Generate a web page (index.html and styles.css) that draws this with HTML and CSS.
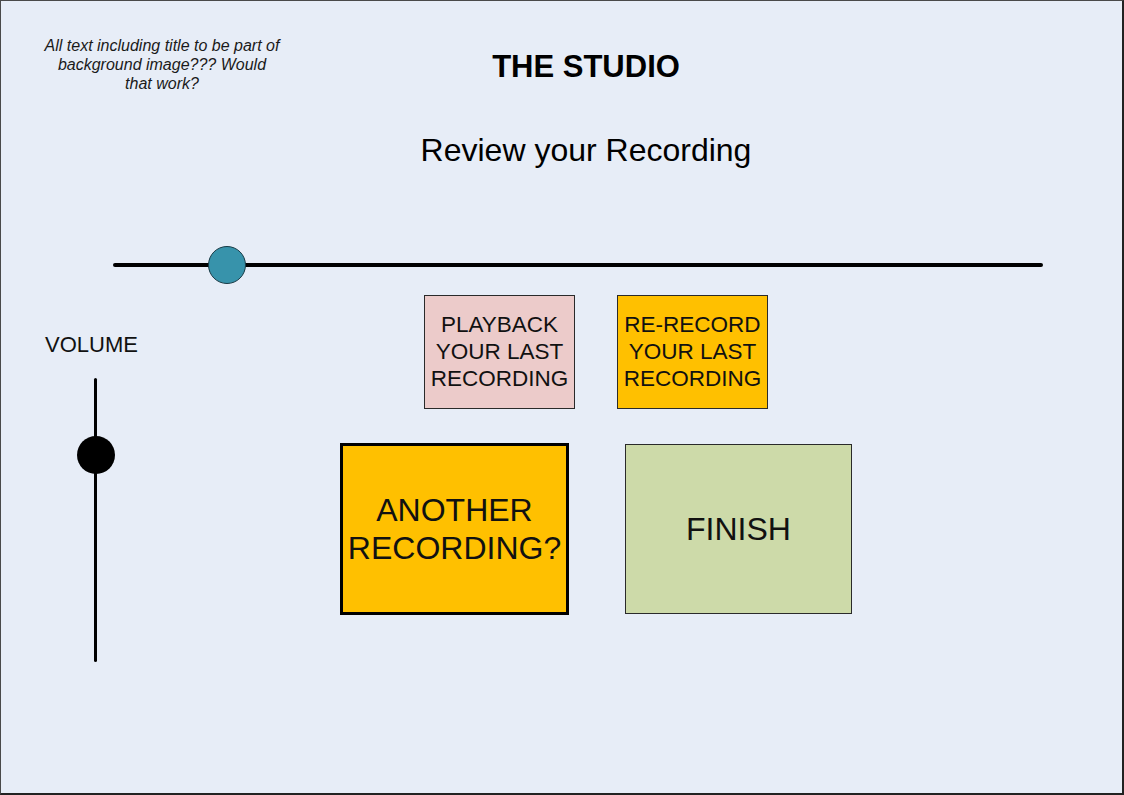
FILE: index.html
```html
<!DOCTYPE html>
<html lang="en">
<head>
    <meta charset="UTF-8" />
    <meta name="viewport" content="width=device-width, initial-scale=1" />
    <title>The Studio - Review your Recording</title>
    <link rel="stylesheet" href="styles.css">
</head>
<body>

    <div class="frame">

        <!-- Header: designer note + titles -->
        <header class="header">
            <p class="note">All text including title to be part of background image??? Would that work?</p>
            <div class="titles">
                <h1 class="title">THE STUDIO</h1>
                <h2 class="subtitle">Review your Recording</h2>
            </div>
        </header>

        <!-- Playback position -->
        <div class="seek">
            <span class="seek-knob"></span>
        </div>

        <div class="lower">
            <!-- Volume -->
            <div class="volume">
                <div class="volume-label">VOLUME</div>
                <div class="volume-track">
                    <span class="volume-knob"></span>
                </div>
            </div>

            <!-- Actions -->
            <div class="actions">
                <div class="row row-small">
                    <a href="#" class="box box-small playback">PLAYBACK<br>YOUR LAST<br>RECORDING</a>
                    <a href="#" class="box box-small rerecord">RE-RECORD<br>YOUR LAST<br>RECORDING</a>
                </div>
                <div class="row row-big">
                    <a href="#" class="box another">ANOTHER<br>RECORDING?</a>
                    <a href="#" class="box finish">FINISH</a>
                </div>
            </div>
        </div>

    </div>

</body>
</html>
```

FILE: styles.css
```css
* {
    margin: 0;
    padding: 0;
    box-sizing: border-box;
    font-family: "Liberation Sans", Arial, sans-serif;
}
body {
    background: #ffffff;
    color: #111;
}
/* Outer canvas */
.frame {
    width: 1124px;
    height: 795px;
    background: #e7edf7;
    border: 1px solid #4a4a4a;
    border-right: 2px solid #222;
    border-bottom: 2px solid #222;
    overflow: hidden;
}

/* Header */
.header {
    display: grid;
    grid-template-columns: 321px 528px;
    align-items: start;
}
.note {
    margin-top: 35px;
    padding: 0 42px 0 43px;
    font-size: 16px;
    line-height: 19px;
    font-style: italic;
    text-align: center;
    color: #1a1a1a;
}
.titles {
    text-align: center;
}
.title {
    margin-top: 47px;
    font-size: 31px;
    line-height: 37px;
    font-weight: 700;
    color: #000;
}
.subtitle {
    margin-top: 46px;
    font-size: 32px;
    line-height: 38px;
    font-weight: 400;
    color: #000;
}

/* Horizontal slider */
.seek {
    position: relative;
    margin: 94px 0 0 112px;
    width: 930px;
    height: 4px;
    background: #000;
    border-radius: 2px;
}
.seek-knob {
    position: absolute;
    left: 95px;
    top: -17px;
    width: 38px;
    height: 38px;
    border-radius: 50%;
    background: #3793ab;
    border: 1px solid #173a45;
}

/* Lower section */
.lower {
    display: flex;
    align-items: flex-start;
    margin-top: 28px;
}
.volume {
    width: 144px;
    padding-left: 44px;
    margin-top: 37px;
}
.volume-label {
    font-size: 22px;
    line-height: 26px;
    color: #111;
}
.volume-track {
    position: relative;
    margin: 20px 0 0 49px;
    width: 3px;
    height: 284px;
    background: #000;
    border-radius: 2px;
}
.volume-knob {
    position: absolute;
    left: -17px;
    top: 58px;
    width: 38px;
    height: 38px;
    border-radius: 50%;
    background: #000;
}

/* Action boxes */
.actions {
    width: 902px;
    display: flex;
    flex-direction: column;
    align-items: center;
    gap: 34px;
}
.row {
    display: flex;
    align-items: center;
}
.row-small {
    gap: 42px;
}
.row-big {
    gap: 56px;
}
.box {
    display: flex;
    align-items: center;
    justify-content: center;
    text-align: center;
    text-decoration: none;
    color: #111;
    border: 1px solid #2a2a2a;
}
.box-small {
    width: 151px;
    height: 114px;
    padding-bottom: 2px;
    font-size: 22.5px;
    line-height: 27px;
}
.playback {
    background: #eccbca;
}
.rerecord {
    background: #ffc000;
}
.another {
    width: 229px;
    height: 172px;
    background: #ffc000;
    border: 3px solid #000;
    font-size: 32px;
    line-height: 38px;
}
.finish {
    width: 227px;
    height: 170px;
    background: #cddaa9;
    font-size: 32px;
    line-height: 38px;
}
```
